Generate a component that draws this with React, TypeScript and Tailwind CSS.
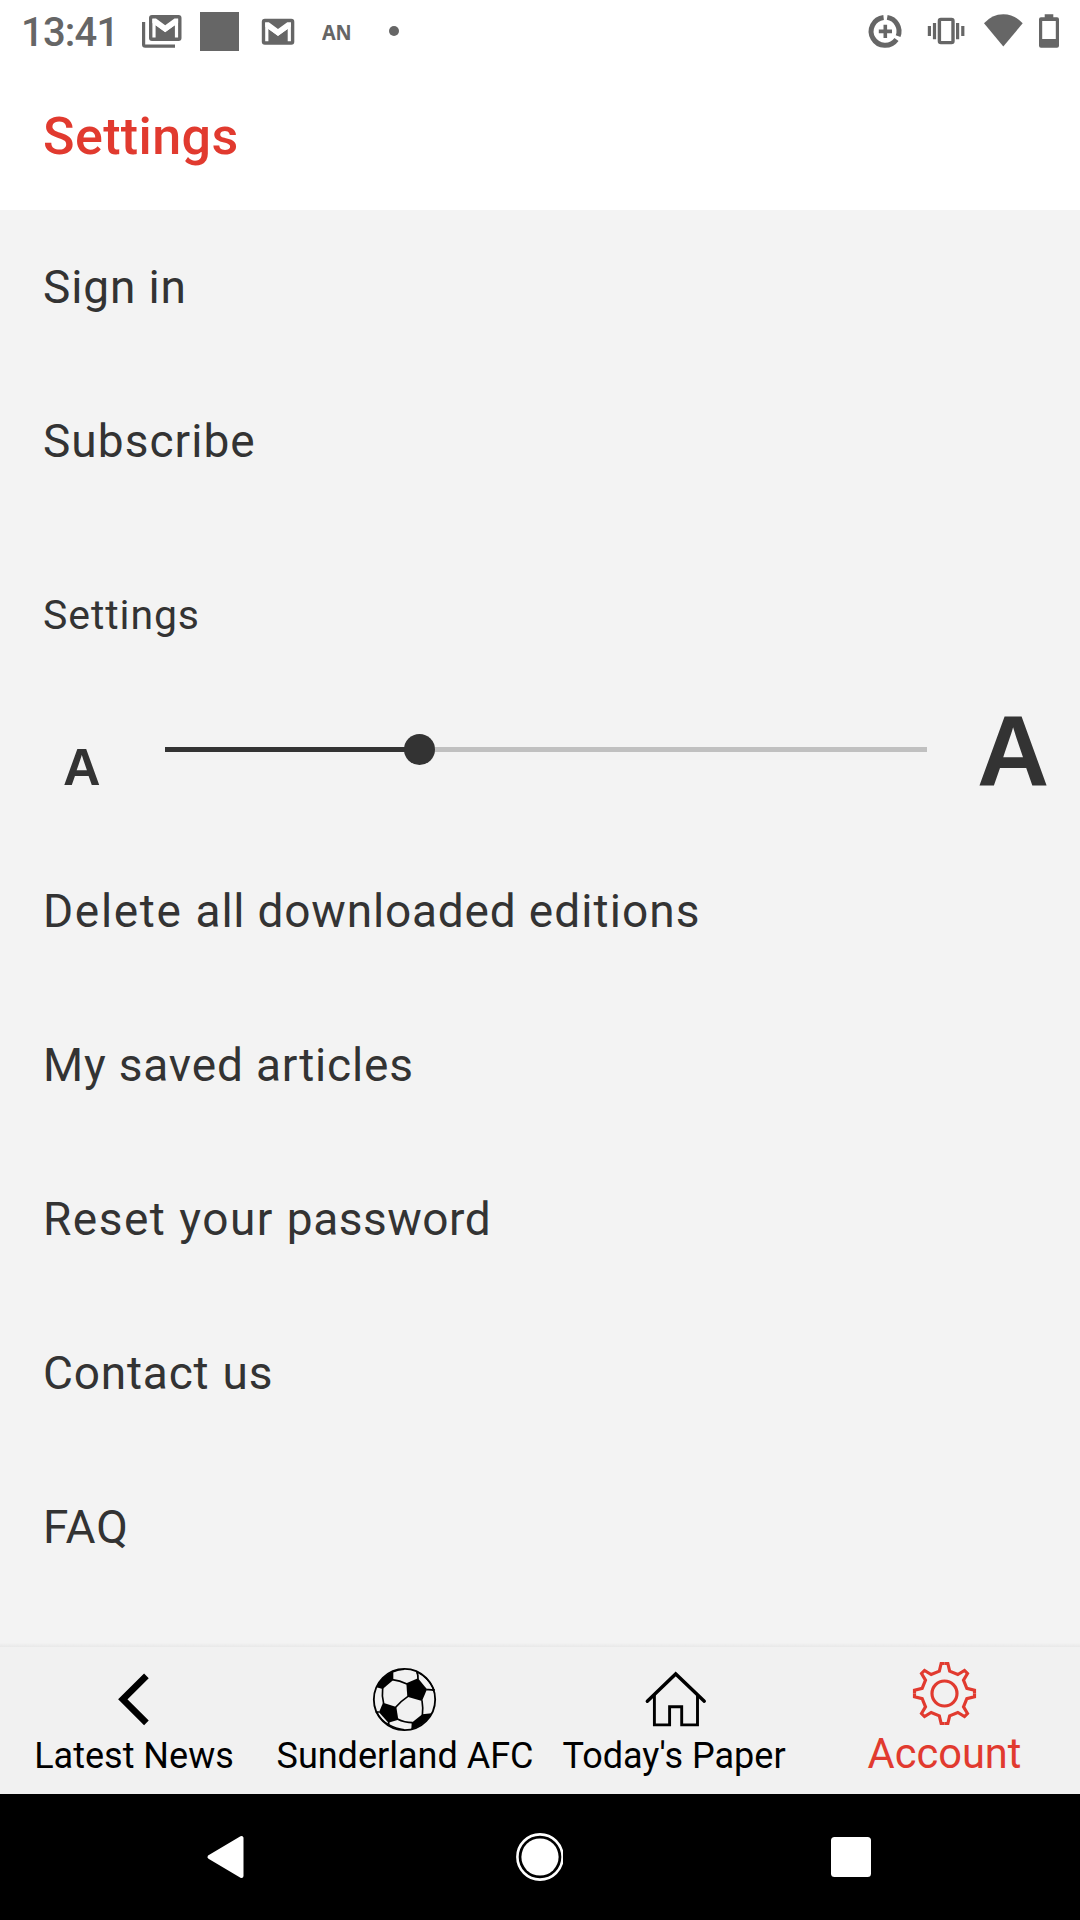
import React from "react";

function GmailMark({ x, y }: { x: number; y: number }) {
  return (
    <g transform={`translate(${x} ${y})`}>
      <rect width="32.5" height="26" rx="3" fill="#666666" />
      <path d="M5 22.6V7L16.2 15.2L27.5 7V22.6" fill="none" stroke="#ffffff" strokeWidth="3.2" />
      <path d="M3.4 3.5H7L16.2 10.2L25.5 3.5H29.1V8L16.2 17L3.4 8Z" fill="#ffffff" />
    </g>
  );
}

function StatusBar() {
  return (
    <div className="flex h-16 items-start text-[#666666]">
      <div className="w-[142px] pl-[21px] text-[40px] leading-[65px] font-medium tracking-[-0.8px]">13:41</div>
      <svg className="h-16 w-[40px]" viewBox="0 0 40 64">
        <path d="M1.6 22V44.5Q1.6 46.2 3.3 46.2H33" fill="none" stroke="#666666" strokeWidth="3.2" />
        <GmailMark x={7} y={15} />
      </svg>
      <div className="mt-3 ml-[18px] h-[39px] w-[39px] bg-[#666666]" />
      <svg className="ml-[22px] h-16 w-[40px]" viewBox="0 0 40 64">
        <GmailMark x={0.8} y={18.7} />
      </svg>
      <div className="ml-[21px] w-[62px] origin-left scale-x-90 font-['Noto_Sans'] text-[22px] leading-[63px] font-bold tracking-[-0.3px]">AN</div>
      <div className="mt-[26px] ml-[5px] h-[10px] w-[10px] rounded-full bg-[#666666]" />
      <svg className="ml-[466px] h-16 w-10" viewBox="0 0 40 64">
        <g fill="none" stroke="#666666" strokeWidth="5">
          <path d="M18.6 17.4A14 14 0 1 0 31.5 39.5" />
          <path d="M22.2 17.4A14 14 0 0 1 33.1 36.2" />
          <path d="M20.3 24.8V38M13.8 31.4H27" strokeWidth="3.6" />
        </g>
      </svg>
      <svg className="ml-[21px] h-16 w-10" viewBox="0 0 40 64">
        <rect x="13.4" y="19.4" width="13.6" height="23.2" rx="1.5" fill="none" stroke="#666666" strokeWidth="3.4" />
        <path d="M3.4 26V36M8.5 23V39.3M31.6 23V39.3M36.8 26V36" stroke="#666666" strokeWidth="3.2" />
      </svg>
      <svg className="ml-[17px] h-16 w-10" viewBox="0 0 40 64">
        <path d="M1 23.3Q9 14.2 20.3 14.2T39.7 23.3L20.3 46.5Z" fill="#666666" />
      </svg>
      <svg className="ml-[15px] h-16 w-6" viewBox="0 0 24 64">
        <path
          fillRule="evenodd"
          d="M6.7 14.3H15.3V17.3H19Q21 17.3 21 19.3V45.7Q21 47.7 19 47.7H3Q1 47.7 1 45.7V19.3Q1 17.3 3 17.3H6.7ZM4.2 21V39H17.8V21Z"
          fill="#666666"
        />
      </svg>
    </div>
  );
}

function Row({ children }: { children: React.ReactNode }) {
  return <div className="flex h-[154px] items-center">{children}</div>;
}

function BackIcon() {
  return (
    <svg className="h-20 w-20" viewBox="0 0 80 80">
      <path d="M51.4 15.8L27.8 39.3L51.4 62.8" fill="none" stroke="#000000" strokeWidth="6.6" />
    </svg>
  );
}

function BallIcon() {
  return (
    <svg className="h-20 w-20" viewBox="0 0 240 240">
      <circle cx="118.5" cy="118.5" r="92" fill="none" stroke="#000000" strokeWidth="5.5" />
      <g fill="#000000">
        <path d="M124 70L159 55L186 88L171 123L127 110Z" />
        <path d="M54 128L94 141L100 179L70 188L42 157Z" />
        <path d="M34 82Q44 54 85 33V60L53 87Z" />
        <path d="M140 188L172 163L200 160Q181 195 139 208Z" />
      </g>
      <g fill="none" stroke="#000000" strokeWidth="5">
        <path d="M82 59Q104 61 126 72M159 57Q160 44 155 36M184 89Q197 88 209 91M171 121Q175 144 172 168M129 109Q109 122 92 142M53 84Q50 107 56 131M97 177Q119 188 143 188M71 186V195M43 156H32" />
        <path d="M34 155Q47 181 71 194Q92 206 118 209M84 36Q100 28 118 28M155 35Q193 55 208 91" strokeWidth="4" />
      </g>
    </svg>
  );
}

function HomeIcon() {
  return (
    <svg className="h-20 w-20" viewBox="0 0 80 80">
      <g fill="none" stroke="#000000">
        <path d="M12.3 41.2L40.7 13.9L69.3 41.2" strokeWidth="3.4" strokeLinecap="round" />
        <path d="M19.4 35V64.9H34.6V46.7H46.7V64.9H62.5V35" strokeWidth="2.9" />
      </g>
    </svg>
  );
}

const toothAngles = [0, 90, 180, 270];

function GearIcon() {
  return (
    <svg className="h-20 w-20" viewBox="0 0 240 240">
      <g transform="translate(118.5 118.5)" fill="none" stroke="#e13a2f" strokeWidth="9.5">
        <circle r="37.5" />
        {toothAngles.map((angle) => (
          <path
            key={angle}
            d="M0 -90H10L15.5 -67L40 -57L60 -69L69 -60L57 -40L67 -15.5L90 -10V0"
            transform={`rotate(${angle})`}
          />
        ))}
      </g>
    </svg>
  );
}

function Slider() {
  return (
    <div className="flex h-[142px] items-start text-[#333333]">
      <div className="flex w-[165px] pl-[63px] font-['Liberation_Sans'] text-[52px] leading-[60px] font-bold">
        <span className="mt-[45px]">A</span>
      </div>
      <div className="relative mt-[42px] flex h-[31px] w-[762px] items-center">
        <div className="h-[5px] w-1/3 bg-[#333333]" />
        <div className="h-[5px] w-2/3 bg-[#c0c0c0]" />
        <div className="absolute left-1/3 h-[31px] w-[31px] -translate-x-[15px] rounded-full bg-[#333333]" />
      </div>
      <div className="mt-[9px] ml-[50px] font-['Liberation_Sans'] text-[100px] leading-[100px] font-bold">
        <span>A</span>
      </div>
    </div>
  );
}

export default function App() {
  return (
    <div className="flex h-[1920px] w-[1080px] flex-col overflow-hidden bg-[#f3f3f3] font-['Roboto',sans-serif] text-[#333333]">
      <header className="h-[210px] bg-white">
        <StatusBar />
        <h1 className="pl-[43px] text-[52px] leading-[145px] font-medium tracking-[0.4px] text-[#e13a2f]">Settings</h1>
      </header>

      <main className="h-[1433px] text-[46px] leading-[60px]">
        <Row><span className="pl-[43px] tracking-[0.85px]">Sign in</span></Row>
        <Row><span className="pl-[43px] tracking-[1.05px]">Subscribe</span></Row>
        <div className="mt-5 flex h-[154px] items-center">
          <h2 className="pl-[43px] text-[41px] tracking-[0.9px]">Settings</h2>
        </div>
        <Slider />
        <Row>
          <span className="pl-[43px] tracking-[0.8px]">
            <span className="tracking-[1.65px]">Delete </span>all downloaded <span className="tracking-[1.1px]">editions</span>
          </span>
        </Row>
        <Row><span className="pl-[43px] tracking-[0.82px]">My saved articles</span></Row>
        <Row>
          <span className="pl-[43px] tracking-[0.5px]">
            <span className="tracking-[1.5px]">Reset your </span>password
          </span>
        </Row>
        <Row><span className="pl-[43px] tracking-[0.8px] [word-spacing:1px]">Contact us</span></Row>
        <Row><span className="pl-[43px] tracking-[1px]">FAQ</span></Row>
      </main>
      <div className="h-1 bg-linear-to-b from-[#f2f2f2] to-[#e8e8e8]" />

      <nav className="grid h-[147px] grid-cols-4 bg-[#f1f1f1] text-[36px] leading-[44px] text-black">
        <div className="flex flex-col items-center pt-[13px]">
          <BackIcon />
          <span className="-mt-[6px] pr-[2px]">Latest News</span>
        </div>
        <div className="flex flex-col items-center pt-[13px]">
          <BallIcon />
          <span className="-mt-[6px] whitespace-nowrap">Sunderland AFC</span>
        </div>
        <div className="flex flex-col items-center pt-[13px]">
          <HomeIcon />
          <span className="-mt-[6px] pr-[2px]">Today's Paper</span>
        </div>
        <div className="flex flex-col items-center pt-[7px] text-[41.6px] text-[#e13a2f]">
          <GearIcon />
          <span className="-mt-[2px] pr-[1px]">Account</span>
        </div>
      </nav>

      <div className="flex h-[126px] items-center justify-between bg-black pr-[205px] pl-[203px]">
        <svg className="h-12 w-12" viewBox="0 0 48 48">
          <path d="M6.5 24L38.5 5V43Z" fill="#ffffff" stroke="#ffffff" strokeWidth="4" strokeLinejoin="round" />
        </svg>
        <svg className="h-12 w-12" viewBox="-1 0 48 48">
          <circle cx="24" cy="24" r="22.6" fill="none" stroke="#ffffff" strokeWidth="2.6" />
          <circle cx="24" cy="24" r="18.6" fill="#ffffff" />
        </svg>
        <svg className="h-12 w-12" viewBox="0 0 48 48">
          <rect x="4" y="4" width="40" height="40" rx="3.5" fill="#ffffff" />
        </svg>
      </div>
    </div>
  );
}
